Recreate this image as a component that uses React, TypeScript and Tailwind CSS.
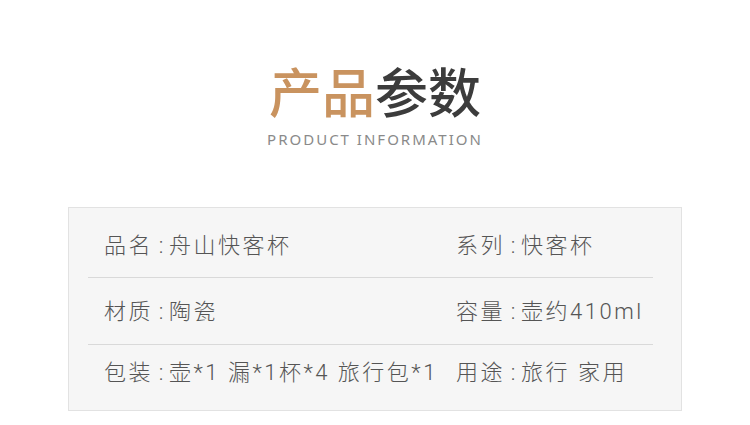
import React from "react";

type Spec = { label: string; value: string };

const rows: { left: Spec; right: Spec; h: string }[] = [
  { left: { label: "品名", value: "舟山快客杯" }, right: { label: "系列", value: "快客杯" }, h: "h-[65px] border-b border-[#d9d9d9]" },
  { left: { label: "材质", value: "陶瓷" }, right: { label: "容量", value: "壶约410ml" }, h: "h-[67px] border-b border-[#d9d9d9]" },
  { left: { label: "包装", value: "壶*1 漏*1杯*4 旅行包*1" }, right: { label: "用途", value: "旅行 家用" }, h: "h-[55px]" },
];

function Item({ spec }: { spec: Spec }) {
  return (
    <span className="whitespace-nowrap">
      {spec.label}
      <span className="inline-block w-[16px] text-center tracking-normal">:</span>
      {spec.value}
    </span>
  );
}

export default function App() {
  return (
    <div
      className="w-[750px] h-[425px] bg-white flex flex-col items-center"
      style={{ fontFamily: 'Roboto, "Noto Sans CJK SC", sans-serif' }}
    >
      {/* Heading */}
      <h1
        className="mt-[52px] text-[53px] leading-[76px] font-medium"
        style={{ fontFamily: '"Noto Sans CJK SC", sans-serif' }}
      >
        <span className="text-[#c9935f]">产品</span>
        <span className="text-[#3c3c3c]">参数</span>
      </h1>
      <p
        className="mt-[1px] text-[15px] leading-[20px] tracking-[2px] text-[#8a8a8a]"
        style={{ fontFamily: '"Noto Sans", sans-serif' }}
      >
        PRODUCT INFORMATION
      </p>

      {/* Spec table */}
      <div className="mt-[58px] w-[614px] h-[204px] bg-[#f6f6f6] border border-[#e2e2e2] pl-[19px] pr-[28px] pt-[5px]">
        {rows.map((row, i) => (
          <div
            key={i}
            className={`${row.h} flex items-center px-[16px] text-[22px] tracking-[2.5px] font-light text-[#555555]`}
          >
            <div className="w-[352px] shrink-0">
              <Item spec={row.left} />
            </div>
            <div className="shrink-0">
              <Item spec={row.right} />
            </div>
          </div>
        ))}
      </div>
    </div>
  );
}
